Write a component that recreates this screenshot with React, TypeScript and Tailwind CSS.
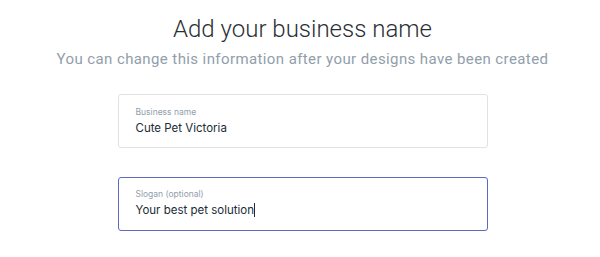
export default function App() {
  return (
    <div className="w-[600px] h-[257px] bg-white overflow-hidden" style={{ fontFamily: "Roboto, 'Liberation Sans', sans-serif" }}>
      <div className="flex flex-col items-center pl-[5px]">
        <h1 className="mt-[13px] text-[24px] leading-[32px] font-light text-[#2a2f35]">Add your business name</h1>
        <p className="mt-[4px] text-[15px] leading-[20px] text-[#919eab] tracking-[0.4px]">You can change this information after your designs have been created</p>
        <div className="mt-[25px] w-[370px] h-[54px] border border-[#dfe3e8] rounded-[3px] pl-[17px] pt-[11px] flex flex-col" style={{ fontFamily: "Inter, 'Liberation Sans', sans-serif" }}>
          <span className="text-[8.5px] leading-[12px] text-[#919eab]">Business name</span>
          <span className="mt-[2px] text-[11.5px] leading-[16px] text-[#212b36]">Cute Pet Victoria</span>
        </div>
        <div className="mt-[29px] w-[370px] h-[54px] border-[1.5px] border-[#5c6ac4] rounded-[3px] pl-[17px] pt-[10px] flex flex-col" style={{ fontFamily: "Inter, 'Liberation Sans', sans-serif" }}>
          <span className="text-[8.5px] leading-[12px] text-[#919eab]">Slogan (optional)</span>
          <span className="mt-[2px] text-[11.5px] leading-[16px] text-[#212b36] flex items-center">Your best pet solution<span className="inline-block w-px h-[14px] bg-[#212b36]" /></span>
        </div>
      </div>
    </div>
  );
}
